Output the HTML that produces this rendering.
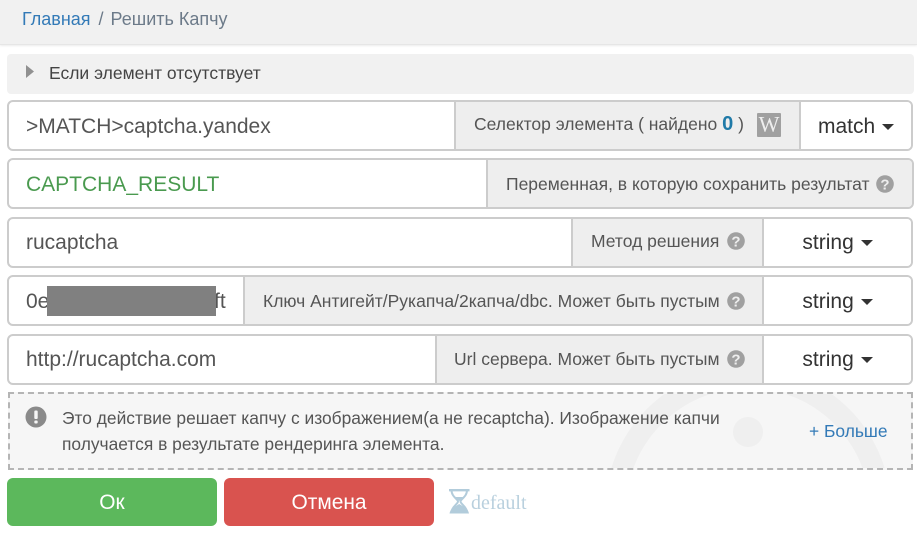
<!DOCTYPE html>
<html lang="ru"><head><meta charset="utf-8"><title>Решить Капчу</title>
<style>
html,body{margin:0;padding:0;background:#fff;width:917px;height:541px;overflow:hidden}
body{position:relative;font-family:"Liberation Sans",sans-serif;color:#555}
.a{position:absolute;white-space:nowrap}
.hd{left:0;top:0;width:917px;height:44px;background:#f1f1f1;border-bottom:1px solid #e6e6e6;box-shadow:0 1px 2px rgba(0,0,0,.08)}
.row{position:absolute;box-sizing:border-box;border:2px solid #ccc;border-radius:6px;background:#fff;height:51px;overflow:hidden}
.ad{position:absolute;top:0;bottom:0;background:#eee;border-left:2px solid #ccc;box-sizing:border-box;font-size:17.5px;color:#555;line-height:45px;text-align:left;padding-left:18px;white-space:nowrap}
.bt{position:absolute;top:0;bottom:0;border-left:2px solid #ccc;box-sizing:border-box;font-size:21px;color:#333;line-height:49px;text-align:center;white-space:nowrap;background:#fff}
.in{position:absolute;left:17px;top:0;line-height:49px;font-size:21px;color:#555;white-space:nowrap}
.car{display:inline-block;width:0;height:0;border-left:6px solid transparent;border-right:6px solid transparent;border-top:6px solid #333;vertical-align:middle;margin-left:1px}
.q{position:absolute;top:13px}
.btn{position:absolute;top:478px;width:210px;height:48px;border-radius:6px;color:#fff;font-size:20.9px;line-height:49px;text-align:center}
</style></head><body>
<div class="a hd"></div>
<div class="a" style="left:22px;top:10px;font-size:18px;line-height:19px;color:#6c7a89"><span style="color:#337ab7">Главная</span><span style="margin:0 7px 0 8px;color:#6c7a89">/</span>Решить Капчу</div>

<div class="a" style="left:7px;top:54px;width:907px;height:40px;background:#f1f1f1;border-radius:4px"></div>
<svg class="a" style="left:26px;top:65px" width="8" height="13"><path d="M0 0L8 6.5L0 13Z" fill="#909090"/></svg>
<div class="a" style="left:49px;top:64px;font-size:17.5px;line-height:19px;color:#444">Если элемент отсутствует</div>

<div class="row" style="left:7px;top:100px;width:906px">
 <div class="in">&gt;MATCH&gt;captcha.yandex</div>
 <div class="ad" style="left:445px;width:346px">Селектор элемента ( найдено <b style="color:#1f7aa8;font-size:20px">0</b> )
  <svg style="position:absolute;left:301px;top:11px" width="24" height="24"><rect width="24" height="24" rx="1" fill="#a0a0a0"/><text x="12" y="18.5" font-family="Liberation Serif,serif" font-size="22" fill="#eee" text-anchor="middle">W</text></svg>
 </div>
 <div class="bt" style="left:790px;right:0">match <span class="car"></span></div>
</div>

<div class="row" style="left:7px;top:158px;width:907px">
 <div class="in" style="color:#4a9a4f">CAPTCHA_RESULT</div>
 <div class="ad" style="left:477px;right:0;line-height:49px">Переменная, в которую сохранить результат <svg class="q" style="left:388px;top:15px" width="18" height="18"><circle cx="9" cy="9" r="8.8" fill="#a0a0a0"/><text x="9" y="14.5" font-family="Liberation Sans,sans-serif" font-weight="bold" font-size="15" fill="#eee" text-anchor="middle">?</text></svg></div>
</div>

<div class="row" style="left:7px;top:217px;width:906px">
 <div class="in" style="top:-1px">rucaptcha</div>
 <div class="ad" style="left:562px;width:192px">Метод решения <svg class="q" style="left:154px" width="18" height="18"><circle cx="9" cy="9" r="8.8" fill="#a0a0a0"/><text x="9" y="14.5" font-family="Liberation Sans,sans-serif" font-weight="bold" font-size="15" fill="#eee" text-anchor="middle">?</text></svg></div>
 <div class="bt" style="left:753px;right:0;line-height:47px">string <span class="car"></span></div>
</div>

<div class="row" style="left:7px;top:275px;width:906px">
 <div class="in">0e</div>
 <div class="in" style="left:205px">ft</div>
 <div class="ad" style="left:234px;width:520px;line-height:49px">Ключ Антигейт/Рукапча/2капча/dbc. Может быть пустым <svg class="q" style="left:482px;top:15px" width="18" height="18"><circle cx="9" cy="9" r="8.8" fill="#a0a0a0"/><text x="9" y="14.5" font-family="Liberation Sans,sans-serif" font-weight="bold" font-size="15" fill="#eee" text-anchor="middle">?</text></svg></div>
 <div class="bt" style="left:753px;right:0">string <span class="car"></span></div>
</div>
<div class="a" style="left:47px;top:286px;width:169px;height:30px;background:#808080"></div>

<div class="row" style="left:7px;top:334px;width:906px">
 <div class="in" style="top:-1px">http://rucaptcha.com</div>
 <div class="ad" style="left:426px;width:328px;padding-left:17px;line-height:47px">Url сервера. Может быть пустым <svg class="q" style="left:290px;top:14px" width="18" height="18"><circle cx="9" cy="9" r="8.8" fill="#a0a0a0"/><text x="9" y="14.5" font-family="Liberation Sans,sans-serif" font-weight="bold" font-size="15" fill="#eee" text-anchor="middle">?</text></svg></div>
 <div class="bt" style="left:753px;right:0;line-height:47px">string <span class="car"></span></div>
</div>

<div class="a" style="left:8px;top:392px;width:905px;height:78px;box-sizing:border-box;border:2px dashed #b5b5b5;background:#f6f6f6;overflow:hidden">
 <svg style="position:absolute;left:-10px;top:-2px" width="915" height="78"><path d="M619.7 85A132.5 132.5 0 0 1 876.3 85" fill="none" stroke="#efefef" stroke-width="21"/><circle cx="748" cy="40" r="15" fill="#efefef"/></svg>
</div>
<svg class="a" style="left:25px;top:406px" width="22" height="22"><circle cx="11" cy="11" r="10.5" fill="#8a8a8a"/><rect x="9.3" y="4.5" width="3.4" height="8.5" rx="1" fill="#f6f6f6"/><rect x="9.3" y="14.5" width="3.4" height="3" rx="1" fill="#f6f6f6"/></svg>
<div class="a" style="left:62px;top:405px;font-size:17.4px;line-height:26px;color:#555">Это действие решает капчу с изображением(а не recaptcha). Изображение капчи<br>получается в результате рендеринга элемента.</div>
<div class="a" style="left:809px;top:422px;font-size:17.4px;line-height:19px;color:#337ab7">+ Больше</div>

<div class="btn" style="left:7px;background:#5cb85c">Ок</div>
<div class="btn" style="left:224px;background:#d9534f">Отмена</div>
<svg class="a" style="left:449px;top:489px" width="21" height="25"><path d="M0 1.2H20.5" stroke="#b2ccdb" stroke-width="2.4"/><path d="M2.5 1C2.5 8 9 10 9 12.5C9 15 3 17 2 24M18 1C18 8 11.5 10 11.5 12.5C11.5 15 17.5 17 18.5 24" fill="none" stroke="#b2ccdb" stroke-width="2"/><path d="M0.5 24.5C1 20 7 17 10.2 15C13.5 17 19.5 20 20 24.5ZM6.5 8H14L10.2 12Z" fill="#b2ccdb"/></svg>
<div class="a" style="left:471px;top:492px;font-family:'Liberation Serif',serif;font-size:20px;line-height:23px;color:#b9d0de">default</div>
</body></html>
